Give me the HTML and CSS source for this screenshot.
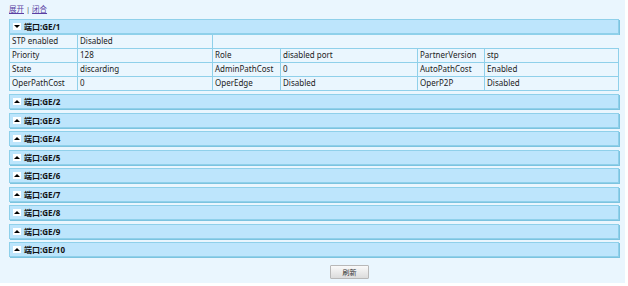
FILE: index.html
```html
<!DOCTYPE html>
<html>
<head>
<meta charset="utf-8">
<link rel="stylesheet" href="styles.css">
</head>
<body>
<div class="page">
  <div class="links"><a href="#">展开</a> | <a href="#">闭合</a></div>

  <div class="panel">
    <div class="panel-head"><span class="tog down"></span>端口:GE/1</div>
    <table class="grid">
      <colgroup>
        <col class="c1"><col class="c2"><col class="c3"><col class="c4"><col class="c5"><col class="c6">
      </colgroup>
      <tr><td>STP enabled</td><td>Disabled</td><td colspan="4" class="blank"></td></tr>
      <tr><td>Priority</td><td>128</td><td>Role</td><td>disabled port</td><td>PartnerVersion</td><td>stp</td></tr>
      <tr><td>State</td><td>discarding</td><td>AdminPathCost</td><td>0</td><td>AutoPathCost</td><td>Enabled</td></tr>
      <tr><td>OperPathCost</td><td>0</td><td>OperEdge</td><td>Disabled</td><td>OperP2P</td><td>Disabled</td></tr>
    </table>
  </div>

  <div class="panel"><div class="panel-head"><span class="tog up"></span>端口:GE/2</div></div>
  <div class="panel"><div class="panel-head"><span class="tog up"></span>端口:GE/3</div></div>
  <div class="panel"><div class="panel-head"><span class="tog up"></span>端口:GE/4</div></div>
  <div class="panel"><div class="panel-head"><span class="tog up"></span>端口:GE/5</div></div>
  <div class="panel"><div class="panel-head"><span class="tog up"></span>端口:GE/6</div></div>
  <div class="panel"><div class="panel-head"><span class="tog up"></span>端口:GE/7</div></div>
  <div class="panel"><div class="panel-head"><span class="tog up"></span>端口:GE/8</div></div>
  <div class="panel"><div class="panel-head"><span class="tog up"></span>端口:GE/9</div></div>
  <div class="panel"><div class="panel-head"><span class="tog up"></span>端口:GE/10</div></div>

  <div class="actions"><button class="btn">刷新</button></div>
</div>
</body>
</html>
```

FILE: styles.css
```css
html, body {
  margin: 0;
  padding: 0;
  background: #ffffff;
}
.page {
  width: 625px;
  height: 283px;
  box-sizing: border-box;
  background: #eaf6fe;
  padding: 3px 6px 0 9px;
  font-family: "Noto Sans", "Noto Sans CJK SC", sans-serif;
  font-size: 8px;
  color: #222;
}
.links {
  height: 15.5px;
  line-height: 12px;
  font-size: 7.5px;
  color: #555;
}
.links a {
  color: #5b3fa3;
  text-decoration: underline;
}
.panel {
  margin-bottom: 3.5px;
}
.panel-head {
  height: 13px;
  line-height: 13px;
  background: #bde5fc;
  border: 1px solid #8fd0ea;
  box-shadow: 1px 1px 0 #7cc3df;
  font-weight: bold;
  font-size: 8px;
  color: #111;
  display: flex;
  align-items: center;
  padding-left: 3px;
}
.tog {
  width: 8px;
  height: 7px;
  background: #fff;
  margin-right: 3px;
  position: relative;
  display: inline-block;
}
.tog::after {
  content: "";
  position: absolute;
  left: 1px;
  width: 0;
  height: 0;
  border-left: 3px solid transparent;
  border-right: 3px solid transparent;
}
.tog.down::after {
  top: 2px;
  border-top: 3px solid #000;
}
.tog.up::after {
  top: 2px;
  border-bottom: 3px solid #000;
}
.grid {
  width: 100%;
  border-collapse: collapse;
  table-layout: fixed;
  background: #eaf6fe;
}
.grid td {
  border: 1px solid #8fd0ea;
  height: 13px;
  padding: 0 0 0 2px;
  line-height: 12px;
  font-size: 8px;
  color: #222;
  white-space: nowrap;
  overflow: hidden;
}
.grid td.blank {
  border-right: none;
}
.c1 { width: 68px; }
.c2 { width: 135px; }
.c3 { width: 68px; }
.c4 { width: 137px; }
.c5 { width: 67px; }
.c6 { width: auto; }
.actions {
  display: flex;
  justify-content: flex-start;
  padding-top: 4.5px;
  padding-left: 321px;
}
.btn {
  width: 39px;
  height: 14px;
  padding: 0;
  font-family: "Noto Sans CJK SC", sans-serif;
  font-size: 7px;
  color: #333;
  background: linear-gradient(#fafafa, #dcdcdc);
  border: 1px solid #b8b8b8;
  border-radius: 1px;
}
```
